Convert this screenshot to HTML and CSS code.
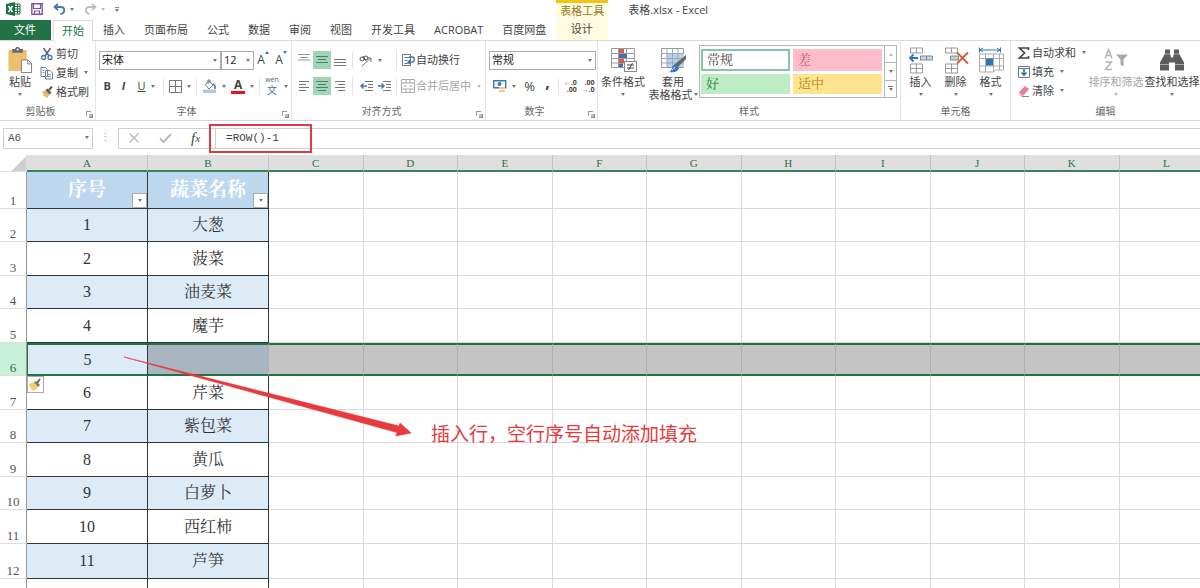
FILE: index.html
```html
<!DOCTYPE html>
<html lang="zh-CN">
<head>
<meta charset="utf-8">
<title>表格.xlsx - Excel</title>
<link rel="stylesheet" href="styles.css">
</head>
<body>
<div class="app">
  <header class="top">
    <div class="quick">
      <svg class="logo" width="15" height="14" viewBox="0 0 15 14"><path d="M0 2l9-2v14l-9-2z" fill="#1e7145"/><path d="M9 2h5v10H9M9 4.500h5M9 7h5M9 9.500h5M11.500 2v10" fill="none" stroke="#1e7145"/><path d="M2.500 4l4 6M6.500 4l-4 6" stroke="#fff" stroke-width="1.500"/></svg>
      <button class="plain" aria-label="保存"><svg width="12" height="12" viewBox="0 0 12 12"><path d="M.8.8h10.400v10.400H.8z" fill="#fff" stroke="#8152a8" stroke-width="1.400"/><path d="M2.500 1v4.500h7V1M3.500 11V8h5v3" fill="none" stroke="#8152a8" stroke-width="1.200"/></svg></button>
      <button class="plain" aria-label="撤消"><svg width="13" height="12" viewBox="0 0 13 12"><path d="M1.500 4h6c5 0 5 6 0 7M5 .8L1.500 4 5 7.200" fill="none" stroke="#3f74b5" stroke-width="1.800"/></svg><i class="caret"></i></button>
      <button class="plain faint" aria-label="恢复"><svg width="13" height="12" viewBox="0 0 13 12"><path d="M11.500 4h-6c-5 0-5 6 0 7M8 .8L11.500 4 8 7.200" fill="none" stroke="#bdbdbd" stroke-width="1.800"/></svg><i class="caret"></i></button>
      <button class="more" aria-label="自定义"><i class="caret"></i></button>
    </div>
    <nav class="tabs">
      <a class="tab file" href="#">文件</a>
      <a class="tab active" href="#">开始</a>
      <a class="tab" href="#">插入</a>
      <a class="tab" href="#">页面布局</a>
      <a class="tab" href="#">公式</a>
      <a class="tab" href="#">数据</a>
      <a class="tab" href="#">审阅</a>
      <a class="tab" href="#">视图</a>
      <a class="tab" href="#">开发工具</a>
      <a class="tab" href="#">ACROBAT</a>
      <a class="tab" href="#">百度网盘</a>
    </nav>
    <div class="context"><span>表格工具</span><a class="tab" href="#">设计</a></div>
    <h1 class="title">表格.xlsx - Excel</h1>
  </header>

  <section class="ribbon">
    <div class="group clipboard">
      <div class="body">
        <button class="big paste"><svg width="26" height="28" viewBox="0 0 26 28"><rect x="1" y="3" width="19" height="22" rx="1" fill="#ecc06f"/><path d="M5 2h3c0-2.500 5-2.500 5 0h3v4H5z" fill="#636a73"/><circle cx="10.500" cy="2.500" r="1" fill="#fff"/><path d="M14.500 13.500h7l3.500 4v9H14.500z" fill="#fff" stroke="#7b8087"/><path d="M21 13.500v4h4" fill="none" stroke="#7b8087"/></svg><span>粘贴</span><i class="caret"></i></button>
        <div class="stack">
          <button class="line"><svg width="14" height="14" viewBox="0 0 14 14"><path d="M3.500 1l5.500 8M10.500 1L5 9" stroke="#5c6670" stroke-width="1.500"/><circle cx="3.500" cy="10.500" r="2" fill="none" stroke="#3d76b8" stroke-width="1.300"/><circle cx="10" cy="10.500" r="2" fill="none" stroke="#3d76b8" stroke-width="1.300"/></svg>剪切</button>
          <button class="line"><svg width="14" height="14" viewBox="0 0 14 14"><path d="M1 1.500h4.500l2 2v7H1zM5.500 4.500H10l2.500 2.500v6h-7z" fill="#fff" stroke="#6c7f93"/><path d="M2.500 4.500h2M2.500 6.500h2M7 8.500h4M7 10.500h4" stroke="#6c9bc9"/></svg>复制<i class="caret"></i></button>
          <button class="line"><svg width="14" height="14" viewBox="0 0 14 14"><path d="M2 7l4-2 4 4-3 4-3-2z" fill="#eab566"/><path d="M5.500 5l2-1.500 4 4L9.500 9.500z" fill="#5e5e5e"/><path d="M9 5l3-3.500" stroke="#5e5e5e" stroke-width="2"/></svg>格式刷</button>
        </div>
      </div>
      <div class="caption">剪贴板<i class="launch"></i></div>
    </div>

    <div class="group font">
      <div class="body rows">
        <div class="row">
          <label class="combo family"><select aria-label="字体"><option>宋体</option></select></label>
          <label class="combo size"><select aria-label="字号"><option>12</option></select></label>
          <button class="tool grow" aria-label="增大字号">A<i class="caret up"></i></button>
          <button class="tool grow" aria-label="减小字号">A<i class="caret"></i></button>
        </div>
        <div class="row">
          <button class="tool"><b>B</b></button>
          <button class="tool"><b><em>I</em></b></button>
          <button class="tool wide"><u>U</u><i class="caret"></i></button>
          <i class="rule"></i>
          <button class="tool wide" aria-label="边框"><svg width="13" height="13" viewBox="0 0 13 13"><path d="M.5.500h12v12H.5zM6.500.500v12M.5 6.500h12" fill="none" stroke="#777"/></svg><i class="caret"></i></button>
          <i class="rule"></i>
          <button class="tool wide" aria-label="填充颜色"><svg width="15" height="14" viewBox="0 0 15 14"><path d="M3 5.500L7 2l4 4-4 4z" fill="#fff" stroke="#6b7886"/><path d="M6 5V1h2v3" fill="none" stroke="#6b7886"/><path d="M11 5c3 1 2 3 2 5" fill="none" stroke="#3d76b8" stroke-width="1.500"/><path d="M1 10.500h13V14H1z" fill="#a9c8ea"/></svg><i class="caret"></i></button>
          <button class="tool wide fontcolor" aria-label="字体颜色"><span>A</span><i class="caret"></i></button>
          <i class="rule"></i>
          <button class="tool wide pinyin" aria-label="拼音"><span><small>wén</small>文</span><i class="caret"></i></button>
        </div>
      </div>
      <div class="caption">字体<i class="launch"></i></div>
    </div>

    <div class="group align">
      <div class="body rows">
        <div class="row">
          <button class="tool" aria-label="顶端对齐"><svg width="12" height="12" viewBox="0 0 12 12"><path d="M0 .5h12M2 3.500h8M0 6h12" stroke="#9a9a9a"/></svg></button>
          <button class="tool on" aria-label="垂直居中"><svg width="12" height="12" viewBox="0 0 12 12"><path d="M0 2.500h12M2 5.500h8M0 8.500h12" stroke="#55796a"/></svg></button>
          <button class="tool" aria-label="底端对齐"><svg width="12" height="12" viewBox="0 0 12 12"><path d="M0 5.500h12M0 8.500h12M0 11.500h12" stroke="#777"/></svg></button>
          <i class="rule"></i>
          <button class="tool turn" aria-label="方向"><svg width="14" height="13" viewBox="0 0 14 13"><path d="M3 12l9-8M12 8V4H8" fill="none" stroke="#777"/><circle cx="3" cy="5" r="2" fill="none" stroke="#555"/><circle cx="7" cy="4" r="2" fill="none" stroke="#555"/><path d="M4 2l3 5" stroke="#555"/></svg><i class="caret"></i></button>
          <i class="rule"></i>
          <button class="tool text"><svg width="14" height="14" viewBox="0 0 14 14"><path d="M1.500 1.500h8v11h-8zM3.500 4.500h5M3.500 7.500h3M3.500 10.500h4" fill="none" stroke="#6b7886"/><path d="M8 4h3c3 0 3 5 0 5H7M9 7L7 9l2 2" fill="none" stroke="#3d76b8" stroke-width="1.300"/></svg>自动换行</button>
        </div>
        <div class="row">
          <button class="tool" aria-label="左对齐"><svg width="10" height="10" viewBox="0 0 10 10"><path d="M0 .5h10M0 3.500h7M0 6.500h10M0 9.500h7" stroke="#777"/></svg></button>
          <button class="tool on" aria-label="居中"><svg width="12" height="10" viewBox="0 0 12 10"><path d="M0 .5h12M2 3.500h8M0 6.500h12M2 9.500h8" stroke="#55796a"/></svg></button>
          <button class="tool" aria-label="右对齐"><svg width="10" height="10" viewBox="0 0 10 10"><path d="M0 .5h10M3 3.500h7M0 6.500h10M3 9.500h7" stroke="#777"/></svg></button>
          <i class="rule"></i>
          <button class="tool" aria-label="减少缩进量"><svg width="13" height="10" viewBox="0 0 13 10"><path d="M5 .5h8M8 3.500h5M8 6.500h5M5 9.500h8" stroke="#777"/><path d="M7 5H1M3.500 2.500L1 5l2.500 2.500" fill="none" stroke="#3d76b8" stroke-width="1.400"/></svg></button>
          <button class="tool" aria-label="增加缩进量"><svg width="13" height="10" viewBox="0 0 13 10"><path d="M5 .5h8M8 3.500h5M8 6.500h5M5 9.500h8" stroke="#777"/><path d="M0 5h6M3.500 2.500L6 5 3.500 7.500" fill="none" stroke="#3d76b8" stroke-width="1.400"/></svg></button>
          <i class="rule"></i>
          <button class="tool text off"><svg width="14" height="14" viewBox="0 0 14 14"><path d="M.5.500h13v13H.5zM.5 4h13M.5 10h13M5 .5V4M9 .5V4M5 10v3.500M9 10v3.500M3 7h3M8 7h3" fill="none" stroke="#aaa"/></svg>合并后居中<i class="caret"></i></button>
        </div>
      </div>
      <div class="caption">对齐方式<i class="launch"></i></div>
    </div>

    <div class="group number">
      <div class="body rows">
        <div class="row"><label class="combo format"><select aria-label="数字格式"><option>常规</option></select></label></div>
        <div class="row">
          <button class="tool wide" aria-label="会计数字格式"><svg width="14" height="14" viewBox="0 0 14 14"><path d="M.7 1.700h12v7H.7z" fill="#fff" stroke="#3d76b8" stroke-width="1.400"/><circle cx="6.500" cy="5" r="2" fill="#3d76b8"/><path d="M6 8h6v5H6z" fill="#f0c987"/><path d="M6 10.500h6" stroke="#fff"/></svg><i class="caret"></i></button>
          <button class="tool percent">%</button>
          <button class="tool comma"><b>,</b></button>
          <i class="rule"></i>
          <button class="tool digits" aria-label="增加小数位数"><span><b>←</b>.0<br>.00</span></button>
          <button class="tool digits" aria-label="减少小数位数"><span>.00<br><b>→</b>.0</span></button>
        </div>
      </div>
      <div class="caption">数字<i class="launch"></i></div>
    </div>

    <div class="group styles">
      <div class="body">
        <button class="big cond"><svg width="27" height="25" viewBox="0 0 27 25"><path d="M1.500.500h23v19h-23zM1.500 5.500h23M1.500 10.500h23M1.500 15h23M8.500.500v19M16.500.500v19" fill="#fff" stroke="#999"/><path d="M9 1h5v4H9zM9 11h5v4H9z" fill="#d25b45"/><path d="M9 6h8v4H9zM9 15.500h4V19H9z" fill="#4472ae"/><rect x="14.500" y="13.500" width="12" height="10" fill="#fff" stroke="#888"/><path d="M17 17h7M17 20h7M22.500 15l-4 7" stroke="#444"/></svg><span>条件格式</span><i class="caret"></i></button>
        <button class="big tablefmt"><svg width="27" height="25" viewBox="0 0 27 25"><path d="M1.500.500h22v19h-22z" fill="#fff" stroke="#999"/><path d="M7 5h17v14H7z" fill="#b9d2ec"/><path d="M1.500 5.500h22M1.500 10.500h22M1.500 15h22M7 .5v19M12.500.500v19M18 .5v19" stroke="#9aa9b8"/><path d="M26 7v4l-9 9-3-3z" fill="#666"/><path d="M15 16l4 4c-1 4-6 5-10 4 4-1 2-6 6-8z" fill="#3d76b8"/><path d="M12 22c2-1 2-2 3-3" stroke="#fff"/></svg><span>套用</span><span>表格格式<i class="caret"></i></span></button>
        <div class="gallery">
          <div class="swatches">
            <button class="swatch normal">常规</button><button class="swatch bad">差</button>
            <button class="swatch good">好</button><button class="swatch neutral">适中</button>
          </div>
          <div class="scroll"><button aria-label="上一行"><i class="caret up"></i></button><button aria-label="下一行"><i class="caret"></i></button><button class="all" aria-label="其他"><i class="caret"></i></button></div>
        </div>
      </div>
      <div class="caption">样式</div>
    </div>

    <div class="group cells">
      <div class="body">
        <button class="big"><svg width="26" height="26" viewBox="0 0 26 26"><path d="M2.500.500h12v5h-12zM8.500.500v5M2.500 16.500h12v9h-12zM8.500 16.500v9M2.500 21h12" fill="#fff" stroke="#999"/><path d="M12.500 8.500h12v4h-12z" fill="#c5d8ee" stroke="#7d8793"/><path d="M18.500 8.500v4" stroke="#7d8793"/><path d="M10 10.500H2M5.500 7L2 10.500 5.500 14" fill="none" stroke="#2f75b5" stroke-width="1.800"/></svg><span>插入</span><i class="caret"></i></button>
        <button class="big"><svg width="26" height="26" viewBox="0 0 26 26"><path d="M2.500.500h12v5h-12zM8.500.500v5M2.500 16.500h12v9h-12zM8.500 16.500v9M2.500 21h12" fill="#fff" stroke="#999"/><path d="M7.500 8.500h8v4h-8z" fill="#b7d9cb" stroke="#7d8793"/><path d="M14 5l11 11M25 5L14 16" stroke="#d2573d" stroke-width="1.800"/></svg><span>删除</span><i class="caret"></i></button>
        <button class="big"><svg width="26" height="26" viewBox="0 0 26 26"><path d="M2 2.500h20M5 .5L2 2.500l3 2M19 .5l3 2-3 2M1.500 0v5M22.500 0v5" fill="none" stroke="#2f75b5"/><path d="M1.500 6.500h24v16h-8l-2 2h-14zM1.500 11h24M1.500 18.500h24M7.500 6.500v18M15.500 6.500v18M21.500 6.500v16" fill="#fff" stroke="#aaa"/><path d="M8 11h7v7H8z" fill="#2f75b5"/></svg><span>格式</span><i class="caret"></i></button>
      </div>
      <div class="caption">单元格</div>
    </div>

    <div class="group editing">
      <div class="body">
        <div class="stack">
          <button class="line"><svg width="12" height="12" viewBox="0 0 12 12"><path d="M10.500 3V1H1.500l5 5-5 5h9V9" fill="none" stroke="#444" stroke-width="1.700"/></svg>自动求和<i class="caret"></i></button>
          <button class="line"><svg width="12" height="12" viewBox="0 0 12 12"><path d="M.5.500h11v11H.5zM.5 2.500h11" fill="#fff" stroke="#777"/><path d="M6 3v6M3.500 6.500L6 9.200l2.500-2.700" fill="none" stroke="#2f75b5" stroke-width="1.600"/></svg>填充<i class="caret"></i></button>
          <button class="line"><svg width="12" height="12" viewBox="0 0 12 12"><path d="M1 7l6-6 4 3-6 7H3z" fill="#e77e9a"/><path d="M1 7l4 3.500L4 11.500H2.500L.5 9z" fill="#f3bccb"/><path d="M4 11.500h7" stroke="#888"/></svg>清除<i class="caret"></i></button>
        </div>
        <button class="big find off"><svg width="26" height="26" viewBox="0 0 26 26"><path d="M2 11L5.500 2 9 11M3.200 8h4.600M2.500 14.500h6l-6 7.500h6.500" fill="none" stroke="#b5b5b5" stroke-width="1.500"/><path d="M13 7h12l-4.500 5v7l-3-2v-5z" fill="#a8a8a8"/></svg><span>排序和筛选</span><i class="caret"></i></button>
        <button class="big find"><svg width="26" height="26" viewBox="0 0 26 26"><path d="M6 6V2h5v4l1 4h2l1-4V2h5v4l5 9v8h-9v-8h-6v8H1v-8z" fill="#5d5d5d"/><path d="M6 6.500h5M15 6.500h5M1 17h9M16 17h9" stroke="#aaa"/></svg><span>查找和选择</span><i class="caret"></i></button>
      </div>
      <div class="caption">编辑</div>
    </div>
  </section>

  <section class="formula">
    <label class="combo name"><select aria-label="名称框"><option>A6</option></select></label>
    <span class="dots">⋮</span>
    <div class="entry">
      <button class="plain" aria-label="取消"><svg width="12" height="12" viewBox="0 0 12 12"><path d="M1.500 1.500l9 9M10.500 1.500l-9 9" stroke="#bbb" stroke-width="1.500"/></svg></button>
      <button class="plain" aria-label="输入"><svg width="13" height="12" viewBox="0 0 13 12"><path d="M1 6.500l3.500 3.500L12 2" fill="none" stroke="#bbb" stroke-width="2"/></svg></button>
      <button class="plain fx" aria-label="插入函数">f<small>x</small></button>
      <input aria-label="编辑栏" value="=ROW()-1">
      <i class="frame"></i>
    </div>
  </section>

  <main class="sheet">
    <table>
      <colgroup><col class="c-head"><col class="c-data"><col class="c-data"><col><col><col><col><col><col><col><col><col><col></colgroup>
      <thead><tr><th class="corner"></th><th>A</th><th>B</th><th>C</th><th>D</th><th>E</th><th>F</th><th>G</th><th>H</th><th>I</th><th>J</th><th>K</th><th>L</th></tr></thead>
      <tbody>
        <tr class="fields"><th>1</th><td>序号<button class="filter" aria-label="筛选序号"><i class="caret"></i></button></td><td>蔬菜名称<button class="filter" aria-label="筛选蔬菜名称"><i class="caret"></i></button></td><td></td><td></td><td></td><td></td><td></td><td></td><td></td><td></td><td></td><td></td></tr>
        <tr><th>2</th><td>1</td><td>大葱</td><td></td><td></td><td></td><td></td><td></td><td></td><td></td><td></td><td></td><td></td></tr>
        <tr><th>3</th><td>2</td><td>菠菜</td><td></td><td></td><td></td><td></td><td></td><td></td><td></td><td></td><td></td><td></td></tr>
        <tr><th>4</th><td>3</td><td>油麦菜</td><td></td><td></td><td></td><td></td><td></td><td></td><td></td><td></td><td></td><td></td></tr>
        <tr><th>5</th><td>4</td><td>魔芋</td><td></td><td></td><td></td><td></td><td></td><td></td><td></td><td></td><td></td><td></td></tr>
        <tr class="selected"><th>6</th><td>5</td><td></td><td></td><td></td><td></td><td></td><td></td><td></td><td></td><td></td><td></td><td></td></tr>
        <tr><th>7</th><td>6<button class="brush" aria-label="插入选项"><svg width="14" height="14" viewBox="0 0 14 14"><path d="M1 6l5-2 4 5-4 4-3-2z" fill="#f0d264"/><path d="M6 4l2-1 4 4-2 2z" fill="#777"/><path d="M9 5l3-4" stroke="#666" stroke-width="2"/></svg></button></td><td>芹菜</td><td></td><td></td><td></td><td></td><td></td><td></td><td></td><td></td><td></td><td></td></tr>
        <tr><th>8</th><td>7</td><td>紫包菜</td><td></td><td></td><td></td><td></td><td></td><td></td><td></td><td></td><td></td><td></td></tr>
        <tr><th>9</th><td>8</td><td>黄瓜</td><td></td><td></td><td></td><td></td><td></td><td></td><td></td><td></td><td></td><td></td></tr>
        <tr><th>10</th><td>9</td><td>白萝卜</td><td></td><td></td><td></td><td></td><td></td><td></td><td></td><td></td><td></td><td></td></tr>
        <tr><th>11</th><td>10</td><td>西红柿</td><td></td><td></td><td></td><td></td><td></td><td></td><td></td><td></td><td></td><td></td></tr>
        <tr class="tall"><th>12</th><td>11</td><td>芦笋</td><td></td><td></td><td></td><td></td><td></td><td></td><td></td><td></td><td></td><td></td></tr>
        <tr><th></th><td></td><td></td><td></td><td></td><td></td><td></td><td></td><td></td><td></td><td></td><td></td><td></td></tr>
      </tbody>
    </table>
    <div class="note">
      <svg width="288" height="80" viewBox="0 0 288 80"><path d="M0 0L275 69l1-3 11 10-15 3 1-3.500z" fill="#e8393c" stroke="#e8393c" stroke-width=".6"/></svg>
      <p>插入行，空行序号自动添加填充</p>
    </div>
  </main>
</div>
</body>
</html>
```

FILE: styles.css
```css
* { box-sizing: border-box; }
body { margin: 0; background: #fff; color: #444; font: 11px/14px "Open Sans", "Noto Sans CJK SC", sans-serif; }
button, select, input { font: inherit; color: inherit; border: 0; background: none; padding: 0; margin: 0; border-radius: 0; white-space: nowrap; }
a { color: inherit; text-decoration: none; }
svg { display: block; flex: none; overflow: visible; }
i { font-style: normal; }
.app { height: 100vh; display: flex; flex-direction: column; overflow: hidden; }

.caret { display: inline-block; flex: none; border: 2px solid transparent; border-top: 3px solid #777; border-bottom: 0; }
.caret.up { border-top: 0; border-bottom: 3px solid #bbb; }
.off { color: #a6a6a6; }
.off .caret, .faint .caret { border-top-color: #bbb; }

.top { display: grid; grid-template-columns: auto 52px 1fr; grid-template-rows: 20px 20px; border-bottom: 1px solid #dadada; flex: none; }
.quick { display: flex; align-items: center; gap: 10px; padding: 0 0 2px 6px; }
.plain { display: flex; align-items: center; gap: 4px; }
.more { display: flex; flex-direction: column; align-items: center; gap: 1px; }
.more::before { content: ""; width: 4px; height: 1px; background: #888; }
.tabs { grid-row: 2; display: flex; }
.tab { padding: 0 10px 0 9px; line-height: 20px; white-space: nowrap; }
.tab.file { background: #217346; color: #fff; padding: 0 15px 0 14px; }
.tab.active { color: #217346; background: #fff; border: 1px solid #dadada; border-bottom: 0; height: 21px; margin: 0 1px 0 2px; padding: 0 8px; }
.context { grid-row: 1 / 3; grid-column: 2; display: flex; flex-direction: column; align-items: center; background: #fffbe0; border-top: 3px solid #f0c419; color: #957a20; line-height: 16px; white-space: nowrap; }
.context .tab { color: #444; }
.title { grid-column: 3; margin: 0; padding-left: 20px; font-size: 11px; font-weight: 400; line-height: 20px; }

.ribbon { display: flex; height: 80px; flex: none; border-bottom: 1px solid #d5d5d5; }
.group { flex: none; display: flex; flex-direction: column; border-right: 1px solid #e4e4e4; }
.body { display: flex; height: 63px; }
.caption { position: relative; text-align: center; line-height: 14px; color: #666; font-size: 10px; }
.launch { position: absolute; right: 4px; top: 7px; width: 5px; height: 5px; border-left: 1px solid #999; border-top: 1px solid #999; }
.launch::after { content: ""; position: absolute; left: 2px; top: 2px; width: 3px; height: 3px; border-right: 1px solid #888; border-bottom: 1px solid #888; background: #bbb; }
.clipboard { width: 96px; }
.font { width: 196px; }
.align { width: 194px; }
.number { width: 112px; }
.styles { width: 303px; }
.cells { width: 110px; }
.editing { flex: 1 0 189px; border: 0; }
.clipboard .caption { padding-right: 14px; }
.font .caption, .align .caption, .number .caption { padding-right: 14px; }

.big { display: flex; flex-direction: column; align-items: center; padding-top: 6px; line-height: 13px; }
.big svg { margin-bottom: 1px; height: 27px; }
.big > .caret { margin-top: 5px; }
.paste { width: 40px; }
.stack { display: flex; flex-direction: column; padding-top: 3px; }
.line { display: flex; align-items: center; gap: 2px; height: 19px; }
.line .caret { margin-left: 4px; }

.rows { flex-direction: column; padding: 9px 0 0 3px; gap: 6px; }
.row { display: flex; align-items: center; height: 20px; }
.combo { position: relative; display: block; height: 19px; }
.combo select { appearance: none; width: 100%; height: 100%; border: 1px solid #ababab; padding: 0 2px; color: #222; background: #fff; }
.combo::after { content: ""; position: absolute; right: 4px; top: 8px; border: 2px solid transparent; border-top: 3px solid #777; border-bottom: 0; }
.family { width: 122px; }
.size { width: 33px; }
.format { width: 107px; }
.tool { display: flex; align-items: center; justify-content: center; width: 18px; height: 18px; gap: 5px; }
.tool b { font-family: "Open Sans", sans-serif; }
.tool.on { background: #9fd5b9; }
.tool.wide { width: 32px; }
.tool.text { width: auto; gap: 1px; }
.tool.text .caret { margin-left: 5px; }
.tool.turn { width: 36px; padding-right: 10px; }
.grow { font-size: 12px; gap: 0; }
.grow .caret { align-self: flex-start; border-top-color: #3d76b8; }
.grow .caret.up { border-bottom-color: #3d76b8; }
.rule { width: 1px; height: 18px; background: #e4e4e4; margin: 0 2px; }
.align .rule { margin: 0 4px 0 3px; }
.fontcolor span { font-weight: 700; font-size: 12px; line-height: 12px; width: 14px; border-bottom: 3px solid #e8161b; }
.pinyin span { display: flex; flex-direction: column; align-items: center; line-height: 12px; font-size: 10px; color: #3d76b8; }
.pinyin small { font-size: 7px; line-height: 8px; color: #666; }
.percent { font-size: 13px; }
.comma { font-size: 16px; padding-bottom: 8px; }
.digits { font-size: 7px; line-height: 7px; font-weight: 700; text-align: right; }
.digits b { color: #2f75b5; }

.cond { width: 50px; }
.tablefmt { width: 50px; }
.tablefmt span { display: flex; align-items: center; gap: 1px; }
.gallery { display: flex; width: 198px; height: 53px; margin: 4px 0 0 1px; border: 1px solid #b5b5b5; }
.swatches { flex: 1; display: grid; grid-template: 1fr 1fr / 1fr 1fr; gap: 3px; padding: 3px 2px 3px 1px; }
.swatch { text-align: left; padding-left: 5px; font: 13px/18px "Liberation Serif", "Noto Serif CJK SC", "Noto Sans CJK SC", serif; }
.normal { border: 2px solid #86c5a5; padding-left: 4px; }
.bad { background: #ffbdca; color: #c0505e; }
.good { background: #bdecc5; color: #2f7a3a; }
.neutral { background: #ffe490; color: #b58319; }
.scroll { display: flex; flex-direction: column; width: 12px; }
.scroll button { flex: 1; display: flex; align-items: center; justify-content: center; border-left: 1px solid #b5b5b5; border-bottom: 1px solid #b5b5b5; }
.scroll button:last-child { border-bottom: 0; }
.scroll .all { flex-direction: column; gap: 1px; }
.all::before { content: ""; width: 5px; height: 1px; background: #777; }

.cells .body { padding-left: 2px; }
.cells .big { width: 35px; }
.editing .stack { padding: 2px 0 0 7px; width: 77px; }
.editing .find { width: 56px; }

.formula { display: flex; align-items: center; height: 34px; flex: none; padding-left: 3px; font-family: "Liberation Mono", monospace; }
.formula .combo { width: 90px; height: 21px; }
.formula select { border-color: #cfcfcf; padding-left: 4px; color: #555; }
.dots { width: 25px; text-align: center; color: #999; }
.entry { position: relative; flex: 1; display: flex; align-items: center; height: 21px; border: 1px solid #cfcfcf; border-right: 0; padding-left: 9px; gap: 19px; }
.fx { font: italic 15px/18px "Liberation Serif", serif; gap: 0; }
.fx small { font-size: 11px; }
.entry input { flex: 1; align-self: stretch; min-width: 0; margin-left: -4px; padding-left: 10px; border-left: 1px solid #cfcfcf; color: #444; }
.frame { position: absolute; left: 90px; top: -5px; width: 103px; height: 29px; border: 2px solid #dd3b3f; }

.sheet { position: relative; flex: 1; overflow: hidden; }
table { table-layout: fixed; width: calc(100% + 14px); border-collapse: separate; border-spacing: 0; font-family: "Liberation Serif", "Noto Serif CJK SC", "Noto Sans CJK SC", serif; }
.c-head { width: 27px; }
.c-data { width: 121px; }
th, td { padding: 0; font-weight: 400; text-align: center; }
thead th { height: 17px; font-size: 11px; line-height: 14px; color: #2f6d50; background: #dfdfdf; border-right: 1px solid #c4c4c4; border-bottom: 2px solid #3a8462; }
thead .corner { border-color: #ddd; border-bottom-width: 1px; background: linear-gradient(135deg, #fff 65%, #cfcfcf 65%); }
tbody tr { height: 33px; }
tbody tr:nth-child(odd) { height: 34px; }
tbody tr.fields { height: 37px; }
tbody tr.tall { height: 35px; }
tbody th { vertical-align: bottom; font-size: 13px; line-height: 15px; color: #555; border-bottom: 1px solid #ddd; border-right: 1px solid #999; }
td { position: relative; border-right: 1px solid #d9d9d9; border-bottom: 1px solid #d9d9d9; font-size: 16px; line-height: 20px; color: #333; }
td:nth-child(-n+3) { border-color: #30363c; }
tr:nth-child(even) td:nth-child(-n+3) { background: #ddebf7; }
.fields td { font-size: 19px; line-height: 24px; font-weight: 700; color: #fff; }
.fields td:nth-child(-n+3) { background: #bdd7ee; }
.filter { position: absolute; right: 0; bottom: 0; width: 15px; height: 15px; display: flex; align-items: center; justify-content: center; background: #fff; border: 1px solid #aaa; }
tr.selected th { background: #c9f1d9; color: #217346; }
tr.selected td { background: #c4c4c4; border-bottom: 2px solid #217346; border-top: 2px solid #217346; border-right-color: #b0b0b0; }
tr.selected td:nth-child(2) { border-left: 1px solid #217346; border-right-color: #30363c; }
tr.selected td:nth-child(3) { background: #a9b5c0; }
.brush { position: absolute; left: 0; top: 0; width: 17px; height: 17px; background: #fff; border: 1px solid #aaa; }
.note { position: absolute; left: 124px; top: 202px; display: flex; align-items: flex-end; gap: 19px; color: #e8393c; }
.note p { margin: 0; padding-bottom: 2px; font-size: 19px; line-height: 20px; font-family: "Noto Sans CJK SC", sans-serif; }
.note svg { margin-bottom: 8px; }
```
